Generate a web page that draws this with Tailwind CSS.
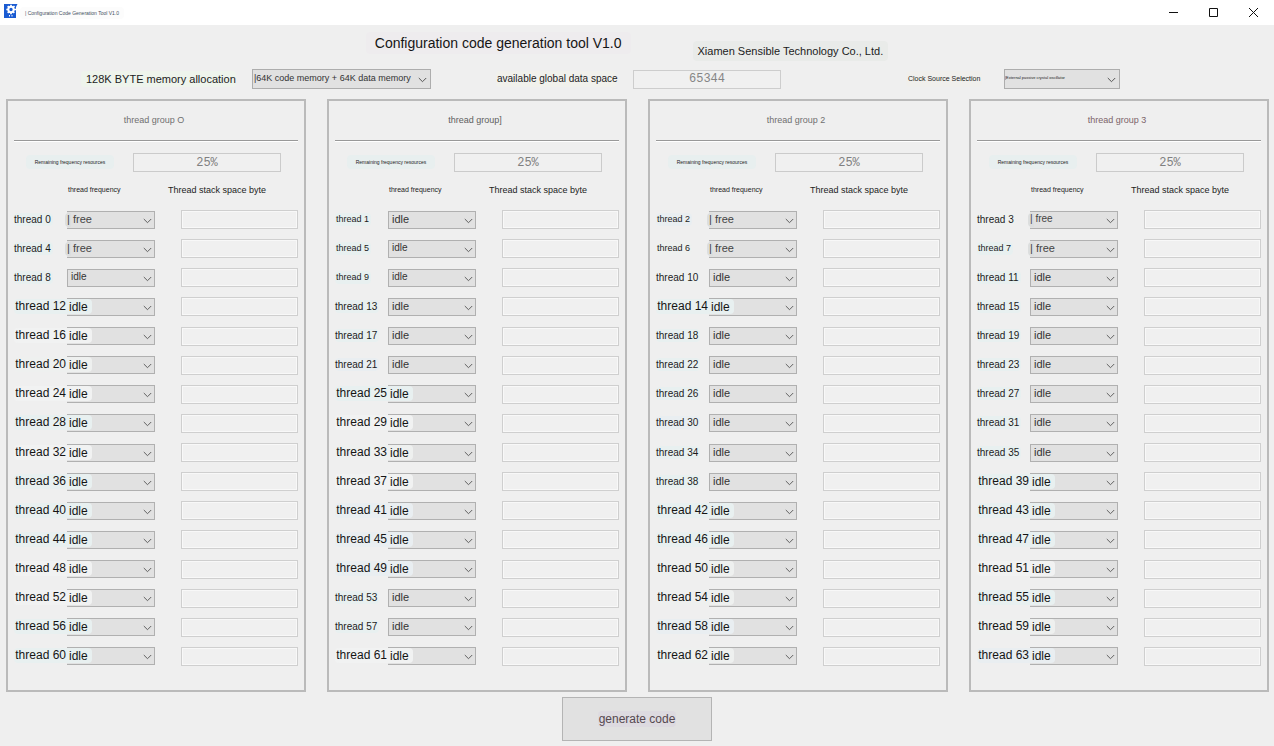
<!DOCTYPE html>
<html lang="en">
<head>
<meta charset="utf-8">
<meta name="viewport" content="width=device-width, initial-scale=1">
<title>Configuration Code Generation Tool V1.0</title>
<script src="https://cdn.jsdelivr.net/npm/@tailwindcss/browser@4"></script>
</head>
<body class="flex min-h-screen flex-col bg-[#efefef] font-['Liberation_Sans',Arial,sans-serif] text-[#1c1c1c]">

<header class="flex h-[25px] shrink-0 items-center bg-white pl-1">
  <svg class="mb-[3px] size-[14px]" viewBox="0 0 14 14" aria-hidden="true">
    <path fill="#1a5bd2" d="M0 0h13.500l-1.500 3v11H0z"/>
    <circle cx="7" cy="5.500" r="2.700" fill="none" stroke="#fff" stroke-width="2"/>
    <path stroke="#fff" stroke-width="1.700" d="M7 .8v2M7 8.200v2M2.300 5.500h2M9.700 5.500h3M3.700 2.200l1.300 1.300M9 7.500l1.300 1.300M10.500 2L9 3.500M5 7.500L3.700 8.800"/>
    <path fill="#fff" d="M5 11h1v1.500H5zM7.500 11h1v1.500h-1z"/>
  </svg>
  <h1 class="ml-[2px] rounded-sm bg-[#fcfcfc] px-[5px] py-[2px] text-[5px] leading-[8px] text-[#44505c]">| Configuration Code Generation Tool V1.0</h1>
  <div class="ml-auto flex pr-[1px]">
    <button type="button" aria-label="Minimize" class="flex h-[22px] w-10 items-center justify-center"><svg class="size-[11px]" viewBox="0 0 11 11"><path d="M1 5.500h9" stroke="#111" fill="none"/></svg></button>
    <button type="button" aria-label="Maximize" class="flex h-[22px] w-10 items-center justify-center"><svg class="size-[11px]" viewBox="0 0 11 11"><path d="M1.500 1.500h8v8h-8z" stroke="#111" fill="none"/></svg></button>
    <button type="button" aria-label="Close" class="flex h-[22px] w-10 items-center justify-center"><svg class="size-[11px]" viewBox="0 0 11 11"><path d="M1 1l9 9M10 1l-9 9" stroke="#111" fill="none"/></svg></button>
  </div>
</header>

<div class="flex h-[44px] shrink-0 items-start justify-center gap-[62px] pr-5 pt-[7px]">
  <h2 class="rounded bg-[#eeecee] px-[9px] text-[14px] leading-[22px] text-[#151515]">Configuration code generation tool V1.0</h2>
  <p class="mt-[9px] rounded bg-[#e9ebe9] px-[5px] text-[11px] leading-[20px]">Xiamen Sensible Technology Co., Ltd.</p>
</div>

<div class="flex h-5 shrink-0 items-center pl-[81px]">
  <label for="memory" class="mb-[1px] w-[155px] rounded bg-[#eef4ec] pl-[5px] text-[11px] leading-4 whitespace-nowrap">128K BYTE memory allocation</label>
  <div class="relative ml-4 w-[179px]">
    <select id="memory" class="block h-5 w-full appearance-none border border-[#adadad] bg-[#e1e1e1] pl-[1px] text-[9px] text-[#333]"><option>|64K code memory + 64K data memory</option></select>
    <svg class="pointer-events-none absolute top-[8px] right-1 h-[6px] w-[9px]" viewBox="0 0 9 6"><path d="M.8 1L4.500 4.700 8.200 1" fill="none" stroke="#555"/></svg>
  </div>
  <label for="space" class="mb-[1px] ml-[65px] w-[120px] rounded bg-[#f1f1ec] pl-[1px] text-[10px] leading-4 whitespace-nowrap">available global data space</label>
  <input id="space" value="65344" readonly class="ml-[17px] h-[19px] w-[148px] border border-[#cdcdcd] bg-[#f0f0f0] text-center font-['Liberation_Mono',monospace] text-[12px] text-[#858585]">
  <label for="clock" class="mb-[1px] ml-[125px] w-[76px] rounded bg-[#f0efec] pl-[2px] text-[7px] leading-4 whitespace-nowrap">Clock Source Selection</label>
  <div class="relative ml-[22px] w-[116px]">
    <select id="clock" class="block h-5 w-full appearance-none border border-[#adadad] bg-[#e1e1e1] pb-[2px] text-[4px] text-[#222]"><option>|External passive crystal oscillator</option></select>
    <svg class="pointer-events-none absolute top-[8px] right-1 h-[6px] w-[9px]" viewBox="0 0 9 6"><path d="M.8 1L4.500 4.700 8.200 1" fill="none" stroke="#555"/></svg>
  </div>
</div>

<main id="groups" class="mt-[10px] grid flex-1 grid-cols-4 gap-[21px] pr-[5px] pl-[6px]"></main>

<footer class="flex shrink-0 justify-center px-4 pt-[5px] pb-[5px]">
  <button type="button" class="h-[44px] w-[150px] border border-[#b4b4b4] bg-[#e1e1e1] text-[12px] text-[#55484f]"><span class="rounded bg-[#dddae0] px-[1px] py-[1px]">generate code</span></button>
</footer>

<script>
const tints = {
  t: 'bg-[#e8f0f0]',
  w: 'bg-[#f1f2f2]',
  b: 'bg-[#e9eef1]',
  n: 'bg-[#eef0ef]'
};
// One character per thread: lower case = compact label, upper case = wide label beside a tinted value.
const groups = [
  { name: 'thread group O', color: 'text-[#707070]', rows: 'tttTWNWTWTTTWWTT', free: 2, compact: [2] },
  { name: 'thread group]', color: 'text-[#606060]', rows: 'tttttbTWNWBBBttW', free: 0, compact: [1, 2] },
  { name: 'thread group 2', color: 'text-[#707070]', rows: 'bnnTtttbttTTNNBN', free: 2, compact: [] },
  { name: 'thread group 3', color: 'text-[#7b6469]', rows: 'nttttttttTTTWTNB', free: 2, compact: [0] }
];
const smallLabels = [1, 2, 5, 6, 7, 9];
const chevron = '<svg class="pointer-events-none absolute top-[7px] right-[3px] h-[6px] w-[9px]" viewBox="0 0 9 6"><path d="M.8 1L4.500 4.700 8.200 1" fill="none" stroke="#606060"/></svg>';

function row(group, g, r) {
  const n = r * 4 + g;
  const code = group.rows[r];
  const wide = code !== code.toLowerCase();
  const tint = tints[code.toLowerCase()];
  const free = r < group.free;
  const size = group.compact.includes(r) ? 'text-[10px]' : 'text-[11px]';
  const labelStyle = wide
    ? 'h-[15px] rounded-l pr-[1px] text-right text-[12px] leading-[15px] text-[#151515]'
    : 'h-[13px] w-fit rounded pr-[2px] leading-[13px] ' + (smallLabels.includes(n) ? 'pl-[1px] text-[9px]' : 'text-[10px]');
  const patch = wide ? `<span class="absolute top-[1px] left-0 h-[15px] w-[25px] rounded-r ${tint}"></span>`
    : free ? '<span class="absolute top-[2px] -left-[2px] h-[14px] w-[6px] rounded-l bg-[#dcdede]"></span>' : '';
  const frame = wide || free ? 'border-y border-r' : 'border';
  const text = wide ? 'pl-[2px] text-[12px] text-[#151515]' : free ? 'pl-0 text-[#444] ' + size : 'pl-1 text-[#333] ' + size;
  return `<div class="grid flex-1 grid-cols-[53px_88fr_143fr] items-center">
    <label for="f${n}" class="mb-[1px] block whitespace-nowrap ${tint} ${labelStyle}">thread ${n}</label>
    <div class="relative bg-[#e1e1e1]">
      <div class="h-[18px] ${frame} border-[#b0b0b0]"></div>${patch}
      <select id="f${n}" class="absolute inset-0 h-[18px] w-full appearance-none bg-transparent pb-[2px] ${text}"><option>${free ? '| free' : 'idle'}</option></select>
      ${chevron}
    </div>
    <input aria-label="Stack space of thread ${n}" class="ml-[26px] h-[19px] min-w-0 border border-[#cfcfcf] bg-[#f0f0f0] inset-shadow-[0_0_0_1px_#f8f8f8]">
  </div>`;
}

document.getElementById('groups').innerHTML = groups.map((group, g) => `
<section class="flex min-w-0 flex-col border-2 border-[#bababa] px-[6px] pb-[19px]">
  <h3 class="h-[39px] pr-1 text-center text-[9px] leading-[38px] ${group.color}">${group.name}</h3>
  <hr class="h-[2px] border-t border-b border-t-[#999] border-b-white">
  <div class="mt-[11px] flex items-center pr-[17px] pl-[12px]">
    <label for="p${g}" class="mb-[2px] w-[88px] rounded bg-[#e8efef] text-center text-[5px] leading-[14px] whitespace-nowrap">Remaining frequency resources</label>
    <input id="p${g}" value="25%" readonly class="ml-auto h-[19px] w-[148px] border border-[#cbcbcb] bg-[#f0f0f0] text-center font-['Liberation_Mono',monospace] text-[12px] text-[#808080]">
  </div>
  <div class="grid h-[33px] grid-cols-[53px_88fr_143fr] pt-[2px] leading-[32px]">
    <span class="col-start-2 pl-[1px] text-[7px]">thread frequency</span>
    <span class="pl-[13px] text-[9px] whitespace-nowrap">Thread stack space byte</span>
  </div>
  <div class="flex flex-1 flex-col">${[...group.rows].map((_, r) => row(group, g, r)).join('')}</div>
</section>`).join('');
</script>
</body>
</html>
